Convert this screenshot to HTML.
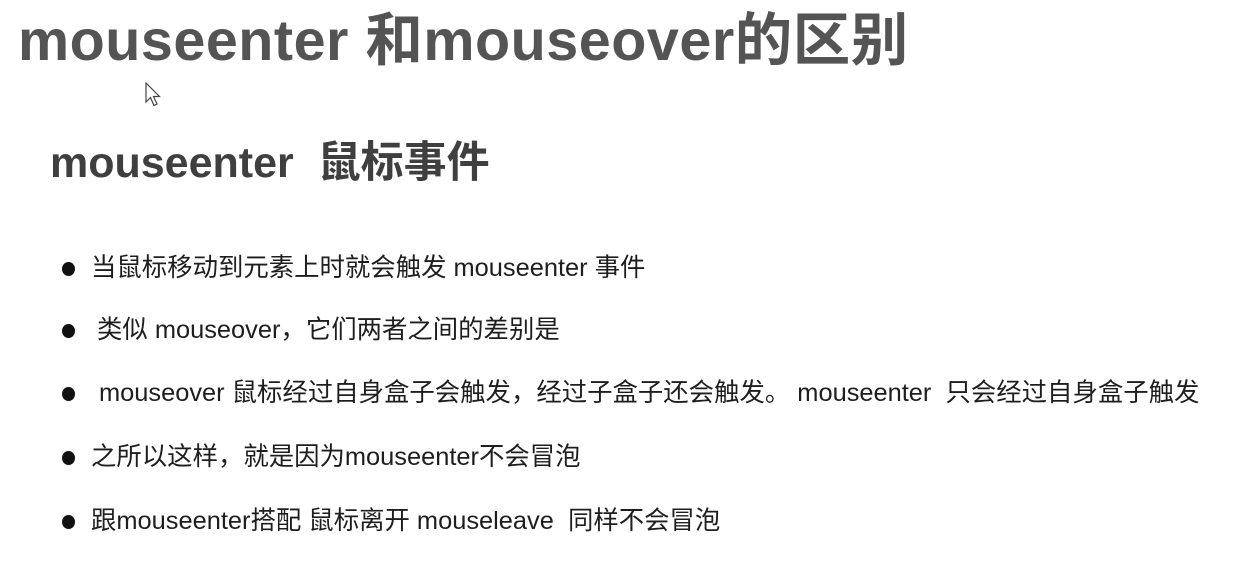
<!DOCTYPE html>
<html><head><meta charset="utf-8"><style>
html,body{margin:0;padding:0;background:#fff;width:1240px;height:563px;overflow:hidden;position:relative;font-family:"Liberation Sans","Noto Sans CJK SC",sans-serif}
h1{position:absolute;left:18px;top:13px;margin:0;font-size:57.5px;font-weight:bold;color:#545454;white-space:nowrap;line-height:1;letter-spacing:0.5px}
h2{position:absolute;left:50px;top:142px;margin:0;font-size:43px;font-weight:bold;color:#3f3f3f;white-space:nowrap;line-height:1}
.b{position:absolute;font-size:25.4px;color:#1e1e1e;white-space:nowrap;line-height:1}
.d{position:absolute;width:13px;height:14px;border-radius:50%;background:#111}
</style></head><body>
<h1>mouseenter 和mouseover的区别</h1>
<svg style="position:absolute;left:145px;top:82px" width="18" height="26" viewBox="0 0 18 26"><path d="M1 1 L1 20 L5.5 15.5 L9 23.5 L12 22 L8.5 14.5 L14.5 14.5 Z" fill="#fff" stroke="#444" stroke-width="1.2"/></svg>
<h2>mouseenter&nbsp; 鼠标事件</h2>
<div class="d" style="left:62px;top:262px"></div>
<div class="b" style="left:91px;top:256px">当鼠标移动到元素上时就会触发 mouseenter 事件</div>
<div class="d" style="left:62px;top:324px"></div>
<div class="b" style="left:97px;top:318px">类似 mouseover，它们两者之间的差别是</div>
<div class="d" style="left:62px;top:387px"></div>
<div class="b" style="left:99px;top:381px">mouseover 鼠标经过自身盒子会触发，经过子盒子还会触发。 mouseenter&nbsp; 只会经过自身盒子触发</div>
<div class="d" style="left:62px;top:451px"></div>
<div class="b" style="left:91px;top:445px">之所以这样，就是因为mouseenter不会冒泡</div>
<div class="d" style="left:62px;top:515px"></div>
<div class="b" style="left:91px;top:509px">跟mouseenter搭配 鼠标离开 mouseleave&nbsp; 同样不会冒泡</div>
</body></html>
